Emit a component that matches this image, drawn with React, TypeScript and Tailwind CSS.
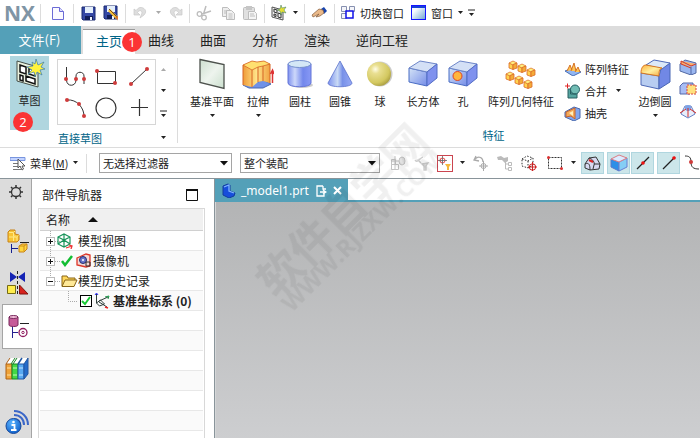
import type { ReactNode } from "react";

const Svg = ({ w, h, children, className = "" }: { w: number; h: number; children: ReactNode; className?: string }) => (
    <svg width={w} height={h} viewBox={`0 0 ${w} ${h}`} fill="none" className={`shrink-0 ${className}`} aria-hidden="true">
        {children}
    </svg>
);

const Caret = ({ className = "" }: { className?: string }) => (
    <Svg w={7} h={4} className={className}>
        <path d="M1 0h5L3.500 3z" fill="currentColor" />
    </Svg>
);

const Divider = ({ className = "" }: { className?: string }) => <span className={`w-px h-[19px] bg-[#dcdcdc] shrink-0 ${className}`} />;

const IconButton = ({ label, children, className = "" }: { label: string; children: ReactNode; className?: string }) => (
    <button type="button" aria-label={label} className={`shrink-0 flex items-center justify-center ${className}`}>
        {children}
    </button>
);

const Defs = () => (
    <svg width="0" height="0" className="absolute" aria-hidden="true">
        <defs>
            <linearGradient id="blueH"><stop offset="0" stopColor="#7f92ee" /><stop offset=".3" stopColor="#cdd8fa" /><stop offset=".65" stopColor="#7287ec" /><stop offset="1" stopColor="#8899f5" /></linearGradient>
            <linearGradient id="blueD" x1="0" y1="0" x2="1" y2="1"><stop offset="0" stopColor="#d5e4f6" /><stop offset="1" stopColor="#748ce8" /></linearGradient>
            <linearGradient id="coneG"><stop offset="0" stopColor="#7c91ee" /><stop offset=".4" stopColor="#c9daf5" /><stop offset=".6" stopColor="#7891e8" /><stop offset="1" stopColor="#97aaf5" /></linearGradient>
            <radialGradient id="ball" cx=".35" cy=".3" r=".75"><stop offset="0" stopColor="#fffde8" /><stop offset=".25" stopColor="#e9df91" /><stop offset=".75" stopColor="#d3c860" /><stop offset="1" stopColor="#aa9e40" /></radialGradient>
            <linearGradient id="plane" x1="0" y1="0" x2="1" y2="1"><stop offset="0" stopColor="#cddfcf" /><stop offset=".5" stopColor="#eef4ee" /><stop offset="1" stopColor="#cadfcd" /></linearGradient>
            <linearGradient id="orange"><stop offset="0" stopColor="#ef9b38" /><stop offset=".5" stopColor="#ffe489" /><stop offset="1" stopColor="#f0a343" /></linearGradient>
            <linearGradient id="blend" x1="0" y1="0" x2="1" y2="1"><stop offset="0" stopColor="#ffb13c" /><stop offset=".5" stopColor="#fff0a0" /><stop offset="1" stopColor="#f5a83f" /></linearGradient>
            <linearGradient id="win" x1="0" y1="0" x2="1" y2="1"><stop offset=".3" stopColor="#f7fbff" /><stop offset="1" stopColor="#6fa3d0" /></linearGradient>
            <radialGradient id="info" cx=".4" cy=".3" r=".8"><stop offset="0" stopColor="#5ab4ff" /><stop offset="1" stopColor="#0757c5" /></radialGradient>
        </defs>
    </svg>
);

const Floppy = () => (
    <>
        <path d="M1 1h13v13H2l-1-1z" fill="#3548a5" stroke="#18296f" />
        <path d="M4 1h8v6H4z" fill="#e4effb" />
        <path d="M4 10h8v4H4z" fill="#121e58" />
        <path d="M9 11h2v3H9z" fill="#eef3ff" />
    </>
);

const TitleBar = () => (
    <header className="flex items-center h-[26px] bg-white shrink-0 text-[11px] leading-4 overflow-hidden">
        <span className="w-10 shrink-0 pl-1 font-bold text-[21px] leading-6 text-[#7f95a5] font-['Open_Sans',sans-serif]">NX</span>
        <Divider />
        <IconButton label="新建" className="w-4 ml-[9px]">
            <Svg w={14} h={15}><path d="M1.500 1.500h7l4 4v8h-11z" fill="#fbfaff" stroke="#6b6bd6" /><path d="M8.500 1.500v4h4" fill="#dcdcff" stroke="#6b6bd6" /></Svg>
        </IconButton>
        <Divider className="ml-[7px]" />
        <IconButton label="保存" className="w-4 ml-1.5"><Svg w={15} h={15}><Floppy /></Svg></IconButton>
        <IconButton label="另存为" className="w-4 ml-[7px]">
            <Svg w={16} h={16}><Floppy /><path d="M6 5l8 8" stroke="#f8c23a" strokeWidth="3" /><path d="M6 4l8 8" stroke="#7b4a12" /><path d="M12 12l3 3.500V11z" fill="#d9772e" /></Svg>
        </IconButton>
        <Divider className="ml-1.5" />
        <IconButton label="撤消" className="w-4 ml-1.5">
            <Svg w={14} h={14}><path d="M1 3v6h6L4.500 6.500C6 4 9 4 9 7L7 12l4-3c4-4 0-8-4-7.500-2 .5-3 2-4 3z" fill="#dedede" stroke="#c8c8c8" strokeWidth=".7" /></Svg>
        </IconButton>
        <Caret className="ml-[7px] text-[#a9a9a9]" />
        <IconButton label="重做" className="w-4 ml-1.5">
            <Svg w={14} h={14}><path d="M13 3v6H7l2.500-2.500C8 4 5 4 5 7l2 5-4-3C-1 5 3 1 7 1.500c2 .5 3 2 4 3z" fill="#dedede" stroke="#c8c8c8" strokeWidth=".7" /></Svg>
        </IconButton>
        <Divider className="ml-[5px]" />
        <IconButton label="剪切" className="w-4 ml-1.5">
            <Svg w={16} h={16}><path d="M10 1L7.500 9M15 6L6 9" stroke="#bdbdbd" strokeWidth="1.500" /><circle cx="3.500" cy="9" r="2.300" stroke="#bdbdbd" strokeWidth="1.300" /><circle cx="8" cy="12.500" r="2.300" stroke="#bdbdbd" strokeWidth="1.300" /></Svg>
        </IconButton>
        <IconButton label="复制" className="w-4 ml-2">
            <Svg w={15} h={15}><path d="M1.500 1.500h5l3 3v6h-8zM3 5h4M3 7h4" fill="#eee" stroke="#bdbdbd" /><path d="M5.500 4.500h5l3 3v6h-8zM7.500 8h4M7.500 10h4M7.500 12h4" fill="#f1f1f1" stroke="#bdbdbd" /></Svg>
        </IconButton>
        <IconButton label="粘贴" className="w-4 ml-1.5">
            <Svg w={16} h={16}><rect x="1.500" y="2.500" width="11" height="12" rx="1" fill="#e0e0e0" stroke="#bdbdbd" /><path d="M4 1h6v4H4z" fill="#c6c6c6" /><path d="M6.500 6.500h6l2 2v6h-8zM8 9h4M8 11h5" fill="#f5f5f5" stroke="#bdbdbd" /></Svg>
        </IconButton>
        <Divider className="ml-1.5" />
        <IconButton label="草图" className="w-4 ml-1.5">
            <Svg w={16} h={16}><path d="M1 2l11 3v10L1 12z" fill="#eee" stroke="#555" /><path d="M3 4l3 1v3L3 7zM3 9l2 .500v2L3 11zM7 8l3 1v4l-3-1z" stroke="#333" /><path d="M10 0l1 3 4-1-2 3 2 3-4-1-1 3-1-4-3-1 3-1z" fill="#e5df35" stroke="#376" strokeWidth=".5" /></Svg>
        </IconButton>
        <Caret className="ml-[5px]" />
        <Divider className="ml-[5px]" />
        <IconButton label="触控" className="w-4 ml-1.5">
            <Svg w={16} h={12}><path d="M10 2l3-2 3 4-3 3z" fill="#1744ad" /><path d="M1 8l7-6 4 1 1 3-4 3-4 1 3-3-6 3z" fill="#eab989" stroke="#835a3b" strokeWidth=".7" /></Svg>
        </IconButton>
        <Divider className="ml-[7px]" />
        <button type="button" className="flex items-center shrink-0 ml-[5px] gap-1 pb-px">
            <Svg w={16} h={15}><path d="M1.500 1.500h5v5h-5zM9.500 1.500h5v5h-5zM1.500 8.500h5v5h-5z" fill="#f4f5fa" stroke="#8790b0" /><rect x="6" y="6" width="7" height="7" fill="#fff" stroke="#1010e8" strokeWidth="1.500" /></Svg>
            切换窗口
        </button>
        <button type="button" className="flex items-center shrink-0 ml-[7px] gap-[5px] pb-px">
            <Svg w={15} h={15}><rect x=".5" y=".5" width="14" height="14" fill="url(#win)" stroke="#1414ff" /><path d="M1 1h13v2H1z" fill="#1540d8" /></Svg>
            窗口
            <Caret className="-ml-px" />
        </button>
        <IconButton label="自定义" className="ml-1"><Svg w={7} h={8}><path d="M0 1h7" stroke="#222" /><path d="M1 4h5L3.500 7z" fill="#222" /></Svg></IconButton>
    </header>
);

const Badge = ({ n, className }: { n: number; className: string }) => (
    <span className={`absolute z-10 size-5 rounded-full bg-[#fb3434] text-white text-[13px] leading-5 text-center font-['Open_Sans',sans-serif] ${className}`}>{n}</span>
);

const tabs = ["曲线", "曲面", "分析", "渲染", "逆向工程"];

const TabBar = () => (
    <nav className="flex h-7 bg-[#dcdcdc] shrink-0 text-[13px] leading-7">
        <button type="button" className="w-[81px] bg-[#54a0b8] text-white pr-0.5 pb-0.5">文件(F)</button>
        <div className="relative w-[52px] ml-0.5 pt-px">
            <button type="button" className="w-full h-[27px] pb-1 leading-[22px] bg-white border-t border-[#999] text-[#006487]">主页</button>
            <Badge n={1} className="left-[39px] top-1.5" />
        </div>
        {tabs.map((tab) => (
            <button key={tab} type="button" className="px-[13px] pb-0.5 shrink-0">{tab}</button>
        ))}
    </nav>
);

const RedDot = ({ x, y }: { x: number; y: number }) => <circle cx={x} cy={y} r="2" fill="#cf3b3b" />;

const SketchGroup = () => (
    <section className="flex shrink-0 w-[177px] pl-2.5 pt-0.5 pb-1">
        <div className="relative w-[39px] h-[74px] bg-[#b0d6df]">
            <button type="button" className="flex flex-col items-center w-full pt-0.5">
                <Svg w={32} h={34}>
                    <path d="M3 3l21 6v20L3 23z" fill="#eaf1df" stroke="#454f48" />
                    <path d="M6 7l6 2v7l-6-2zM6 17l3 1v5l-3-1zM12 18l9 3v5l-9-3zM15 10l6 2v6l-6-2z" fill="#fff" stroke="#111" strokeWidth="1.500" />
                    <path d="M22 1l2 6 6-3-3 5 4 2-5 1 2 5-5-3-2 5-1-5-6 2 4-4-5-3 6-1-1-4 3 2z" fill="#fff33d" stroke="#397bb0" strokeWidth=".7" />
                </Svg>
                <span className="leading-4">草图</span>
            </button>
            <Badge n={2} className="left-[3px] top-14" />
        </div>
        <div className="ml-2 flex flex-col w-[120px]">
            <div className="flex mt-[3px]">
                <div className="grid grid-cols-3 w-[99px] h-[66px] border border-[#d6d6d6] place-items-center">
                    <IconButton label="轮廓"><Svg w={26} h={24}><path d="M5.500 3v13c0 7 9.500 7 9.500 0v-4c0-5 8-5 8 0v8" stroke="#333" /><RedDot x={5} y={15} /><RedDot x={15} y={15} /><RedDot x={23} y={15} /></Svg></IconButton>
                    <IconButton label="矩形"><Svg w={26} h={24}><path d="M4.500 7.500h18v12h-18z" stroke="#333" /><RedDot x={4} y={7} /><RedDot x={22} y={19} /></Svg></IconButton>
                    <IconButton label="直线"><Svg w={26} h={24}><path d="M5 20L21 5" stroke="#333" /><RedDot x={5} y={20} /><RedDot x={21} y={5} /></Svg></IconButton>
                    <IconButton label="圆弧"><Svg w={26} h={24}><path d="M6 4C16 3 23 12 23 20" stroke="#333" /><RedDot x={6} y={4} /><RedDot x={18} y={8} /><RedDot x={23} y={20} /></Svg></IconButton>
                    <IconButton label="圆"><Svg w={26} h={24}><circle cx="13" cy="12" r="10" stroke="#333" strokeWidth="1.200" /></Svg></IconButton>
                    <IconButton label="点"><Svg w={26} h={24}><path d="M13.500 3v17M5 11.500h17" stroke="#333" strokeWidth="1.200" /></Svg></IconButton>
                </div>
                <div className="flex flex-col items-center ml-1 pt-2 w-[7px] gap-[18px]">
                    <Svg w={7} h={4}><path d="M1 4h5L3.500 1z" fill="#aaa" /></Svg>
                    <Caret />
                    <Svg w={7} h={8} className="-mt-px"><path d="M0 1h7" stroke="#222" /><path d="M1 4h5L3.500 7z" fill="#222" /></Svg>
                </div>
            </div>
            <div className="flex items-center justify-between mt-[5px] pl-px pr-2.5 leading-4 text-[#006487]">
                直接草图
                <Caret className="text-[#222]" />
            </div>
        </div>
    </section>
);

const Cube = ({ hole = false }: { hole?: boolean }) => (
    <Svg w={30} h={30}>
        <path d="M1 9l18 4v14L1 23z" fill="url(#blueD)" stroke="#496cc4" />
        <path d="M1 9L12 2l17 3-10 8z" fill="#d4e0f6" stroke="#6d85c8" />
        <path d="M19 13l10-8v14l-10 8z" fill="#8092ee" stroke="#536dc4" />
        {hole && <circle cx="9.500" cy="17" r="4.500" fill="#ffb63d" stroke="#dc4528" />}
    </Svg>
);

const MiniCube = ({ x, y }: { x: number; y: number }) => (
    <g transform={`translate(${x} ${y})`} strokeWidth=".8">
        <path d="M0 2l4 1.500v5L0 7z" fill="#ffd34e" stroke="#dc6b29" />
        <path d="M0 2l4-2 4 2-4 2z" fill="#fff07d" stroke="#de762e" />
        <path d="M4 3.500L8 2v5L4 8.500z" fill="#f4ab37" stroke="#dc6b29" />
    </g>
);

const features: { label: string; width: string; menu?: boolean; icon: ReactNode }[] = [
    { label: "基准平面", width: "w-12", menu: true, icon: <Svg w={30} h={32}><path d="M3 1.500l24 5v24L3 24.500z" fill="url(#plane)" stroke="#4d524d" strokeWidth="1.300" /></Svg> },
    {
        label: "拉伸", width: "w-11", menu: true, icon: (
            <Svg w={32} h={30}>
                <path d="M1 26l9-4 6 1 5-2 8 4-8 4H7z" fill="#6f91e8" stroke="#4a68b2" />
                <path d="M1 6l9-4 5 1 7-1 6 3v19l-7-2-5 1-6 5-9-2z" fill="url(#orange)" />
                <path d="M1 6l9-4 5 1 7-1 6 3-7 2-5 1-6 3z" fill="#ffe070" stroke="#d66525" strokeWidth=".8" />
                <path d="M1 6v20M10 28V11M16 23V8M21 22V7M28 24V5" stroke="#d66525" />
                <path d="M30.500 24V13M28.500 15l2-4 1.500 4" stroke="#d33" strokeWidth="1.500" />
            </Svg>
        ),
    },
    {
        label: "圆柱", width: "w-10", icon: (
            <Svg w={28} h={30}>
                <ellipse cx="16" cy="26" rx="11" ry="3" fill="#ccc" />
                <path d="M2 5v19c0 5 23 5 23 0V5z" fill="url(#blueH)" stroke="#6374d8" />
                <ellipse cx="13.500" cy="5" rx="11.500" ry="3.500" fill="#d4e7f6" stroke="#7590cd" />
            </Svg>
        ),
    },
    { label: "圆锥", width: "w-10", icon: <Svg w={28} h={30}><path d="M14 2L2 24c0 5 24 5 24 0z" fill="url(#coneG)" stroke="#5a71cb" strokeWidth=".8" /></Svg> },
    { label: "球", width: "w-10", icon: <Svg w={28} h={30}><circle cx="14" cy="15" r="12.500" fill="#ccc" /><circle cx="13" cy="15" r="12" fill="url(#ball)" /></Svg> },
    { label: "长方体", width: "w-[46px]", icon: <Cube /> },
    { label: "孔", width: "w-[34px]", icon: <Cube hole /> },
    { label: "阵列几何特征", width: "w-[82px]", icon: <Svg w={32} h={30}><MiniCube x={4} y={2} /><MiniCube x={13} y={5} /><MiniCube x={22} y={9} /><MiniCube x={1} y={13} /><MiniCube x={10} y={17} /><MiniCube x={19} y={21} /></Svg> },
];

const FeatureButton = ({ label, width, menu, icon }: (typeof features)[number]) => (
    <button type="button" className={`flex flex-col items-center shrink-0 whitespace-nowrap ${width}`}>
        <span className="flex items-center justify-center h-8">{icon}</span>
        <span className="leading-4 mt-[3px]">{label}</span>
        {menu && <Caret className="mt-[5px]" />}
    </button>
);

const FeatureGroup = () => (
    <section className="flex flex-col shrink-0 w-[632px] border-l border-[#dcdcdc] my-1">
        <div className="flex pl-2.5 h-[76px]">
            {features.map((f) => <FeatureButton key={f.label} {...f} />)}
            <div className="flex flex-col w-[70px] pl-0.5 shrink-0">
                <button type="button" className="flex items-center gap-1 h-[22px]">
                    <Svg w={17} h={14}><path d="M1 9l8-3 8 4-8 4z" fill="#91b6f2" stroke="#496fb6" /><path d="M3 9l3-6 2 5M7 9l3-8 2 8M11 10l3-5 2 5" fill="#ffc654" stroke="#d57124" /></Svg>
                    阵列特征
                </button>
                <button type="button" className="flex items-center gap-1 h-[22px]">
                    <Svg w={17} h={16}><path d="M1 3h5M3.500.500v5" stroke="#d22" /><path d="M4 6h9v9H4z" fill="#55a5a0" stroke="#285f61" /><circle cx="11" cy="6.500" r="4.500" fill="#72bdb5" stroke="#245c60" /><path d="M6.500 7v4H12" stroke="#285f61" /></Svg>
                    合并
                    <Caret className="ml-1" />
                </button>
                <button type="button" className="flex items-center gap-1 h-[22px]">
                    <Svg w={17} h={15}><path d="M1 6l9-5 6 2v9l-6 3-9-4z" fill="#81a6ef" stroke="#4868ad" /><path d="M2 6l9-4v11l-4-3-5 1z" fill="#f4aa59" stroke="#c5632f" /><path d="M5 7l4-2v5z" fill="#fff1bd" /></Svg>
                    抽壳
                </button>
            </div>
            <FeatureButton
                label="边倒圆"
                width="w-[46px]"
                menu
                icon={
                    <Svg w={32} h={32}>
                        <path d="M2 15l18 3v13L2 27z" fill="#b8cdf1" stroke="#4e69b7" />
                        <path d="M20 18l2-7 9-6v19l-11 7z" fill="#7188e5" stroke="#4866b4" />
                        <path d="M7 7l8-5 16 3-8 6z" fill="#dce9f8" stroke="#4e69b7" />
                        <path d="M2 15c0-5 2-8 5-8l16 3c-3 1-3 4-3 8z" fill="url(#blend)" stroke="#d77722" />
                    </Svg>
                }
            />
            <div className="flex flex-col pl-px pt-px gap-1.5 shrink-0">
                <IconButton label="倒斜角"><Svg w={18} h={16}><path d="M1 5l5-4 11 3v10l-5 2-11-4z" fill="#9bb7f0" stroke="#5269a5" /><path d="M2 2l10 5 5-2M2 2v3l10 4" fill="#ffad66" stroke="#cf3a2d" /><path d="M12 8v8" stroke="#5269a5" /></Svg></IconButton>
                <IconButton label="修剪体"><Svg w={18} h={16}><path d="M1 5l3-3h10v8l-3 3H1z" fill="#a9bdf4" stroke="#5568a9" /><path d="M8 4h9v9H8z" fill="#ffe17e" stroke="#d74242" strokeDasharray="2 1" /></Svg></IconButton>
                <IconButton label="拔模"><Svg w={18} h={16}><path d="M2 11l4-8h6l4 8-7 4z" fill="#e8eefb" stroke="#6680c4" /><circle cx="9" cy="5" r="3" fill="#7ca2e8" /><path d="M9 5v9M1 10l6-4M17 10l-6-4" stroke="#d42d28" /></Svg></IconButton>
            </div>
        </div>
        <div className="text-center leading-4 text-[#006487]">特征</div>
    </section>
);

const Combo = ({ label, value, className }: { label: string; value: string; className: string }) => (
    <div className={`relative shrink-0 h-5 ${className}`}>
        <select aria-label={label} className="appearance-none size-full border border-[#a5a5a5] bg-white pl-[3px] pr-5 leading-4 rounded-none">
            <option>{value}</option>
        </select>
        <Svg w={8} h={5} className="absolute right-1 top-2 pointer-events-none"><path d="M0 0h8L4 4.500z" fill="#111" /></Svg>
    </div>
);

const snapButton = "w-[23px] h-[22px] bg-[#cce6ea] border border-[#b0d6df]";

const SelectionBar = () => (
    <div className="flex items-center h-8 shrink-0 border-t border-b border-t-[#dcdcdc] border-b-[#89949a] overflow-hidden">
        <button type="button" className="flex items-center shrink-0 pl-2.5 w-[82px]">
            <Svg w={16} h={15}><path d="M0 1.500h15v3H0z" fill="#c3d3ff" stroke="#7895de" /><path d="M3 7.500h9M3 10.500h9M3 13.500h8" stroke="#777" /><path d="M8 3v9l2-2 2 4 1.500-1-1.500-3h3z" fill="#fff" stroke="#555" /></Svg>
            <span className="ml-1 whitespace-nowrap">菜单(<u>M</u>)</span>
            <Caret className="ml-1" />
        </button>
        <Divider className="ml-1" />
        <Combo label="类型过滤器" value="无选择过滤器" className="w-[133px] ml-3" />
        <Combo label="选择范围" value="整个装配" className="w-[140px] ml-2" />
        <IconButton label="仅选择装配" className="w-4 ml-2.5">
            <Svg w={16} h={16}><path d="M1.500 4.500h4v5h-4zM1.500 9.500h7v5h-7zM5 1v13M1 6h9" stroke="#c4c4c4" /><ellipse cx="12" cy="6" rx="3" ry="4" fill="#e2e2e2" stroke="#c4c4c4" /></Svg>
        </IconButton>
        <IconButton label="重置过滤器" className="w-4 ml-2">
            <Svg w={16} h={16}><path d="M1 5c2 4 5-2 8-3M4 5l3 3M8 9l6-1-2 3v4h-2v-4z" fill="#e2e2e2" stroke="#cacaca" strokeWidth="1.300" /></Svg>
        </IconButton>
        <IconButton label="细节过滤" className="w-4 h-[17px] ml-[7px] border border-[#cb4550]">
            <Svg w={14} h={14}><circle cx="4.500" cy="4.500" r="2.500" stroke="#e44" /><path d="M4.500 0v9M0 4.500h9" stroke="#666" strokeWidth=".8" /><path d="M7 8h6l-2 3v3H9v-3z" fill="#f7b83c" /></Svg>
        </IconButton>
        <Caret className="ml-1.5" />
        <IconButton label="撤消选择" className="w-4 ml-[7px]"><Svg w={16} h={16}><path d="M3 1L1 5l5 1M2 4c4-4 8-1 8 3" stroke="#aaa" strokeWidth="1.300" /><circle cx="10.500" cy="11" r="2.500" stroke="#aaa" /><path d="M10.500 6v10M6 11h9" stroke="#aaa" /></Svg></IconButton>
        <IconButton label="查找部件" className="w-4 ml-2"><Svg w={16} h={16}><path d="M0 2l4-1 3 2 4-1v4L8 8 5 5 1 5z" fill="#bbb" /><path d="M8.500 6v8H11M8.500 9H11M11.500 7.500h3v3h-3zM11.500 12.500h3v3h-3z" stroke="#bbb" /></Svg></IconButton>
        <IconButton label="选择体" className="w-4 ml-2"><Svg w={16} h={17}><path d="M1 4l5-3 6 2v7l-5 3-6-2zM1 4l6 2 5-3M7 6v7" stroke="#333" strokeDasharray="1.500 1.500" /><circle cx="11.500" cy="12" r="3.200" stroke="#c22" /><path d="M11.500 7v9M7 12h9" stroke="#c22" /></Svg></IconButton>
        <IconButton label="矩形选择" className="w-4 ml-2.5"><Svg w={16} h={14}><path d="M1.500 1.500h13v11h-13z" stroke="#333" strokeDasharray="2 1" /><circle cx="1.500" cy="1.500" r="1.500" fill="#d33" /><circle cx="14.500" cy="12.500" r="1.500" fill="#d33" /></Svg></IconButton>
        <Caret className="ml-[7px]" />
        <IconButton label="面" className={`ml-1 ${snapButton}`}><Svg w={17} h={15}><path d="M1 8l4-6 7-1 4 7-1 5-9 1-5-2z" fill="#d7d9f0" stroke="#333" /><path d="M5 2c4 1 6 5 5 7l-1 4M1 8c4-2 5 1 5 6M10 8h6" stroke="#333" /><path d="M5 4l4 2" stroke="#d22" strokeWidth="2" /></Svg></IconButton>
        <IconButton label="体" className={`ml-[3px] ${snapButton}`}><Svg w={18} h={18}><path d="M1 5l8 3v9l-8-4z" fill="#2e8fe7" stroke="#5c79c9" /><path d="M9 8l8-4v9l-8 4z" fill="#85cef5" stroke="#6680d4" /><path d="M1 5l8-4 8 3-8 4z" fill="#dcebff" stroke="#db7c84" /></Svg></IconButton>
        <IconButton label="中点" className={`ml-px ${snapButton}`}><Svg w={16} h={16}><path d="M2 14L14 2" stroke="#222" strokeWidth="1.300" /><circle cx="8" cy="8" r="1.800" fill="#e11" /></Svg></IconButton>
        <IconButton label="端点" className={`ml-[3px] ${snapButton}`}><Svg w={16} h={16}><path d="M2 14L14 2" stroke="#222" strokeWidth="1.300" /><circle cx="13" cy="3" r="1.800" fill="#e11" /></Svg></IconButton>
        <IconButton label="控制点" className="ml-[5px]"><Svg w={18} h={16}><path d="M0 1c4 0 6 1 6 6s2 7 8 7" stroke="#333" /><RedDot x={6} y={7} /></Svg></IconButton>
    </div>
);

const SideRail = () => (
    <aside className="flex flex-col w-8 shrink-0 bg-[#dcdcdc]">
        <div className="flex flex-col items-center border-r border-[#a5a5a5] h-[125px] shrink-0">
            <IconButton label="设置" className="mt-1.5">
                <Svg w={14} h={14}><circle cx="7" cy="7" r="4.500" stroke="#333" strokeWidth="1.300" /><path d="M7 0v2M7 12v2M0 7h2M12 7h2M2 2l1.500 1.500M10.500 10.500L12 12M12 2l-1.500 1.500M3.500 10.500L2 12" stroke="#333" strokeWidth="1.500" /></Svg>
            </IconButton>
            <IconButton label="装配导航器" className="mt-[30px] ml-1">
                <Svg w={24} h={24}>
                    <path d="M14 13.500h9" stroke="#222" />
                    <path d="M5.500 15v9M5.500 19.500H12" stroke="#152090" />
                    <path d="M2 3l2-2h5v4l4 1v5l-2 2H2z" fill="#f9c535" stroke="#c88217" />
                    <path d="M3 3.500h4.500L9 2M7.500 4v3.500M3 8h4.500L9 6.500M7.500 8h3l2-1.500M7.500 8v4M11 8v4" stroke="#ffe98a" />
                    <path d="M13 17l3-2h5v5l-3 3h-5z" fill="#ffd63e" stroke="#c88217" />
                    <path d="M13 17h5v5M18 17l3-2" stroke="#ce8d18" />
                </Svg>
            </IconButton>
            <IconButton label="约束导航器" className="mt-[18px] ml-1">
                <Svg w={24} h={24}><path d="M4 1l7 5-7 5zM19 1l-7 5 7 5z" fill="#1423b4" /><path d="M11.500 0v24" stroke="#222" strokeDasharray="3 2" /><path d="M1.500 14.500h8v8h-8z" fill="#ffed4d" stroke="#766b13" /><path d="M13.500 14v9H22z" fill="#d7221d" stroke="#80130e" /></Svg>
            </IconButton>
        </div>
        <IconButton label="部件导航器" className="h-[45px] ml-0.5 bg-white border border-r-0 border-[#a5a5a5]">
            <Svg w={24} h={25}><path d="M3 3v8c0 2 9 2 9 0V3z" fill="#c65a98" stroke="#77265b" /><ellipse cx="7.500" cy="3" rx="4.500" ry="1.500" fill="#f2bed9" stroke="#77265b" /><path d="M14 9.500h9" stroke="#222" /><path d="M6.500 13v11M6.500 18.500H12" stroke="#26208f" /><circle cx="17" cy="18.500" r="4" stroke="#901e60" strokeWidth="1.300" /><circle cx="17" cy="18.500" r="1.200" stroke="#901e60" /></Svg>
        </IconButton>
        <div className="flex flex-col items-center flex-1 border-r border-[#a5a5a5]">
            <IconButton label="重用库" className="mt-2 ml-1">
                <Svg w={25} h={24}>
                    <path d="M1 7l4-6h18l-4 6z" fill="#fff" />
                    <path d="M1 7h6v15H1z" fill="#efa33a" stroke="#ae6217" />
                    <path d="M7 7h6v15H7z" fill="#43d846" stroke="#188424" />
                    <path d="M13 7h6v15h-6z" fill="#58a9f2" stroke="#2357a2" />
                    <path d="M19 7l4-6v16l-4 5z" fill="#246bca" stroke="#2357a2" />
                    <path d="M1 7l4-6" stroke="#ae6217" />
                    <path d="M6 7l4-6M8 7l4-6" stroke="#188424" />
                    <path d="M13 7l4-6" stroke="#2357a2" strokeWidth="1.500" />
                    <path d="M2 11h4M2 18h4" stroke="#ffe0a0" />
                    <path d="M8 11h4M8 18h4" stroke="#c2ffb8" />
                    <path d="M14 11h4M14 18h4" stroke="#c2e2ff" />
                </Svg>
            </IconButton>
            <IconButton label="网页浏览器" className="mt-7 ml-1">
                <Svg w={25} h={26}><path d="M9 2c8 0 14 6 14 14M9 6c6 0 10 4 10 10M9 10c4 0 6 2 6 6" stroke="#3b67c8" strokeWidth="2" /><circle cx="8.500" cy="17" r="7.500" fill="url(#info)" stroke="#1a4a9a" /><circle cx="8.500" cy="13" r="1.300" fill="#fff" /><path d="M6.500 16h3v5M6 21h5.500" stroke="#fff" strokeWidth="1.800" /></Svg>
            </IconButton>
        </div>
    </aside>
);

const Expander = ({ open = false }: { open?: boolean }) => (
    <IconButton label={open ? "折叠" : "展开"}>
        <Svg w={15} h={20}><path d={open ? "M4.500 0v10M9 10.500h6" : "M4.500 0v20M9 10.500h6"} stroke="#aaa" strokeDasharray="1 1" /><rect x=".5" y="6.500" width="8" height="8" fill="#fff" stroke="#bbb" /><path d={open ? "M2 10.500h5" : "M2 10.500h5M4.500 8v5"} stroke="#111" /></Svg>
    </IconButton>
);

const rowClass = "flex items-center h-5 border-b border-[#e8e8e8] whitespace-nowrap odd:bg-white even:bg-[#fafafa]";

const Navigator = () => (
    <section className="flex flex-col w-[183px] shrink-0 bg-white border-r border-[#89949a] pl-1.5 pr-[9px] text-xs">
        <div className="flex items-center justify-between h-[29px] pt-0.5 pl-1 pr-[7px] shrink-0">
            <h2>部件导航器</h2>
            <IconButton label="最大化"><Svg w={12} h={12}><path d="M.500 1h11v10.500H.500z" stroke="#111" /><path d="M0 1h12" stroke="#111" strokeWidth="2" /></Svg></IconButton>
        </div>
        <div className="flex-1 min-h-0 overflow-hidden border border-b-0 border-[#d8d8d8] px-px">
            <div className="flex items-center h-[22px] bg-[#f0f0f0] border-b border-[#d0d0d0] pl-1.5 gap-[18px]">
                名称
                <Svg w={10} h={5}><path d="M0 5h10L5 0z" fill="#111" /></Svg>
            </div>
            <ul>
                <li className={`${rowClass} pl-1.5`}>
                    <Expander />
                    <Svg w={17} h={16} className="-ml-1 mr-1"><path d="M1 4l6-3 6 3v7l-6 3-6-3zM1 4l6 3 6-3M7 1v13M1 11l6-4 6 4" stroke="#19945b" strokeWidth="1.200" /><path d="M9 15l6-2M12 12l3 1-1 3" stroke="#e33" strokeWidth="1.300" /></Svg>
                    模型视图
                </li>
                <li className={`${rowClass} pl-1.5`}>
                    <Expander />
                    <Svg w={12} h={12}><path d="M1 6l3 4 7-9" stroke="#12bd32" strokeWidth="2.500" /></Svg>
                    <Svg w={15} h={15} className="ml-[3px] mr-0.5"><path d="M1 5l9-4 4 1v11l-4 1-9-2z" fill="#f3d8d5" stroke="#dd3527" strokeWidth="1.300" /><circle cx="7" cy="7" r="3.500" fill="#6774c9" stroke="#242c70" /><circle cx="7" cy="7" r="1" fill="#fff" /><path d="M10 9h4v4h-4z" stroke="#333" /></Svg>
                    摄像机
                </li>
                <li className={`${rowClass} pl-1.5`}>
                    <Expander open />
                    <Svg w={17} h={14}><path d="M1 12V2h5l1 2h7v3" fill="#ffd75b" stroke="#896517" /><path d="M1 12.500L4 6h12l-3 6.500z" fill="#ffe998" stroke="#896517" /></Svg>
                    模型历史记录
                </li>
                <li className={`${rowClass} pl-7`}>
                    <Svg w={10} h={20}><path d="M.500 0v10.500H10" stroke="#aaa" strokeDasharray="1 1" /></Svg>
                    <label className="flex items-center ml-0.5 font-bold">
                        <input type="checkbox" defaultChecked className="peer appearance-none size-3 border border-black bg-white" />
                        <Svg w={12} h={12} className="-ml-3"><path d="M2 6l3 3 5-7" stroke="#18c934" strokeWidth="2" /></Svg>
                        <Svg w={16} h={16} className="ml-0.5 mr-[3px]"><path d="M2.500 1v9l4-3 4 4-5 2-3-3M5 8l9-4M5 9l8 5" stroke="#303f3b" /><path d="M1 2l1.500-2L4 2" stroke="#22f" /><path d="M11 4l4-1-1 3" stroke="#189747" /><path d="M11 14l3 1" stroke="#e22" strokeWidth="1.500" /></Svg>
                        基准坐标系 (0)
                    </label>
                </li>
                {[0, 1, 2, 3, 4, 5, 6].map((i) => <li key={i} className={rowClass} />)}
            </ul>
        </div>
    </section>
);

const Viewport = () => (
    <main className="flex flex-col flex-1 min-w-0">
        <div className="flex h-[23px] shrink-0 border-b-2 border-[#54a0b8] bg-white">
            <div className="flex items-center h-[23px] bg-[#54a0b8] text-white text-xs pl-[7px] w-[133px]">
                <Svg w={14} h={15}><path d="M1 3l5-2 2 1v6l5 2-1 3-5 2-6-3z" fill="#174edb" stroke="#123c9e" /><path d="M2 4l5-2v6l5 2" stroke="#7db6ff" strokeWidth="1.300" /></Svg>
                <span className="ml-[5px] font-['Noto_Sans',sans-serif]">_model1.prt</span>
                <Svg w={11} h={12} className="ml-[7px]"><path d="M7 1H1v10h7V8M7 1v3h3M4 7h5M7 5l3 2-3 2" stroke="#fff" strokeWidth="1.300" /></Svg>
                <IconButton label="关闭" className="ml-1.5"><Svg w={9} h={9}><path d="M1 1l7 7M8 1L1 8" stroke="#fff" strokeWidth="2" /></Svg></IconButton>
            </div>
        </div>
        <div className="flex-1 border-l border-[#d5d7d8] bg-linear-to-b from-[#b3b4b5] to-[#cdced0]" />
    </main>
);

const Watermark = () => (
    <div className="absolute z-20 left-[348px] top-[216px] pointer-events-none select-none text-black opacity-[0.06] font-bold whitespace-nowrap">
        <div className="-translate-x-1/2 -translate-y-1/2 -rotate-45 flex flex-col items-center">
            <span className="text-[44px] leading-10">软件自学网</span>
            <span className="text-[24px] leading-5 font-['Open_Sans',sans-serif]">WWW.RJZXW.COM</span>
        </div>
    </div>
);

const App = () => {
    return (
        <div className="relative flex flex-col h-screen overflow-hidden bg-white text-[#222] text-[11px] font-['Noto_Sans_CJK_SC',sans-serif]">
            <Defs />
            <TitleBar />
            <TabBar />
            <div className="flex h-[93px] shrink-0 overflow-hidden">
                <SketchGroup />
                <FeatureGroup />
            </div>
            <SelectionBar />
            <div className="flex flex-1 min-h-0">
                <SideRail />
                <Navigator />
                <Viewport />
            </div>
            <Watermark />
        </div>
    );
};

export default App;
